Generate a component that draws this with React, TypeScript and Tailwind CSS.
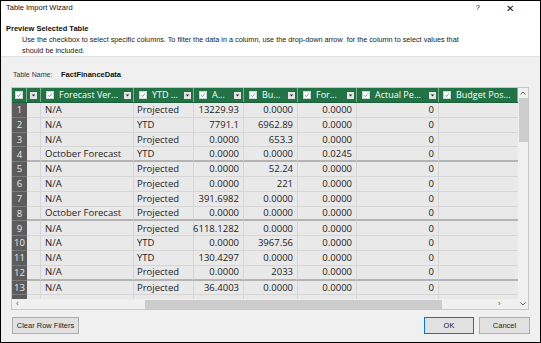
import React from "react";

const cols = "grid grid-cols-[15px_14px_93px_60px_50px_54px_59px_82px_79px]";

const rows: [string, string, string, string, string, string][] = [
  ["N/A", "Projected", "13229.93", "0.0000", "0.0000", "0"],
  ["N/A", "YTD", "7791.1", "6962.89", "0.0000", "0"],
  ["N/A", "Projected", "0.0000", "653.3", "0.0000", "0"],
  ["October Forecast", "YTD", "0.0000", "0.0000", "0.0245", "0"],
  ["N/A", "Projected", "0.0000", "52.24", "0.0000", "0"],
  ["N/A", "Projected", "0.0000", "221", "0.0000", "0"],
  ["N/A", "Projected", "391.6982", "0.0000", "0.0000", "0"],
  ["October Forecast", "Projected", "0.0000", "0.0000", "0.0000", "0"],
  ["N/A", "Projected", "6118.1282", "0.0000", "0.0000", "0"],
  ["N/A", "YTD", "0.0000", "3967.56", "0.0000", "0"],
  ["N/A", "YTD", "130.4297", "0.0000", "0.0000", "0"],
  ["N/A", "Projected", "0.0000", "2033", "0.0000", "0"],
  ["N/A", "Projected", "36.4003", "0.0000", "0.0000", "0"],
];

function Check() {
  return (
    <svg width="8" height="8" viewBox="0 0 8 8" className="shrink-0">
      <rect x="0.5" y="0.5" width="7" height="7" fill="#fff" stroke="#c9d6cc" />
      <path d="M2 4.2 L3.4 5.6 L6 2.4" fill="none" stroke="#6d87b0" strokeWidth="0.9" />
    </svg>
  );
}

function Drop() {
  return (
    <svg width="7" height="7" viewBox="0 0 7 7" className="shrink-0">
      <rect x="0" y="0" width="7" height="7" fill="#e4e4e4" />
      <path d="M1.8 2.6 H5.2 L3.5 4.6 Z" fill="#222" />
    </svg>
  );
}

function HeadCell({ label }: { label: string }) {
  return (
    <div className="flex items-center pl-[5px] pr-[2px] border-r border-[#7fae8e] h-full">
      <Check />
      <span className="ml-[5px] flex-1 truncate text-white">{label}</span>
      <Drop />
    </div>
  );
}

export default function App() {
  return (
    <div className="w-[541px] h-[343px] bg-[#f0f0f0] border border-black flex flex-col text-[#111] font-['Liberation_Sans',Arial,sans-serif] overflow-hidden">
      {/* Header */}
      <div className="bg-white h-[56px] shrink-0 border-b border-[#e0e0e0]">
        <div className="h-[14px] flex items-center pl-[5px] pr-[26px] text-[7.5px]">
          <span className="flex-1">Table Import Wizard</span>
          <span className="mr-[26px]">?</span>
          <span className="text-[10px] font-light">✕</span>
        </div>
        <div className="mt-[9px] pl-[5px] text-[7.5px] leading-[10px] font-bold">Preview Selected Table</div>
        <div className="ml-[21px] w-[446px] text-[7.25px] leading-[11px] text-[#222]">
          Use the checkbox to select specific columns. To filter the data in a column, use the drop-down arrow&nbsp; for the column to select values that should be included.
        </div>
      </div>

      {/* Table name */}
      <div className="mt-[13px] ml-[12px] h-[10px] flex items-center text-[7px]">
        <span className="w-[48px] text-[#333]">Table Name:</span>
        <span className="font-bold text-[7.5px]">FactFinanceData</span>
      </div>

      {/* Grid */}
      <div className="mt-[7px] ml-[10px] w-[518px] border border-[#c8c8c8] flex font-['Open_Sans',sans-serif] text-[9.5px]">
        <div className="w-[506px] flex flex-col">
          <div className="h-[211px] overflow-hidden">
            <div className={`${cols} h-[15px] bg-[#217346] border-b border-[#1b5e39] text-[9px]`}>
              <div className="flex items-center justify-center border-r border-[#7fae8e]">
                <Check />
              </div>
              <div className="flex items-center justify-center border-r border-[#7fae8e]">
                <Drop />
              </div>
              <HeadCell label="Forecast Ver..." />
              <HeadCell label="YTD ..." />
              <HeadCell label="A..." />
              <HeadCell label="Bu..." />
              <HeadCell label="For..." />
              <HeadCell label="Actual Pe..." />
              <div className="flex items-center pl-[4px] border-r border-[#7fae8e] overflow-hidden">
                <Check />
                <span className="ml-[5px] text-white whitespace-nowrap">Budget Pos...</span>
              </div>
            </div>
            {[...rows, ["", "", "", "", "", ""] as typeof rows[number]].map((r, i) => {
              const group = (i + 1) % 4 === 0;
              const line = group ? "border-b-2 border-b-[#b4b4b4]" : "border-b border-b-[#d6d6d6]";
              return (
                <div key={i} className={`${cols} h-[14.8px] leading-none bg-[#e9e9e9] text-[#222]`}>
                  <div className="bg-[#5c5c5c] text-[#e8e8e8] flex items-center justify-center border-b border-[#7a7a7a]">
                    {i < 13 ? i + 1 : ""}
                  </div>
                  <div className={`border-r border-r-[#d6d6d6] ${line}`} />
                  <div className={`flex items-center pl-[4px] border-r border-r-[#d6d6d6] ${line}`}>{r[0]}</div>
                  <div className={`flex items-center pl-[3px] border-r border-r-[#d6d6d6] ${line}`}>{r[1]}</div>
                  <div className={`flex items-center justify-end pr-[4px] border-r border-r-[#d6d6d6] ${line}`}>{r[2]}</div>
                  <div className={`flex items-center justify-end pr-[4px] border-r border-r-[#d6d6d6] ${line}`}>{r[3]}</div>
                  <div className={`flex items-center justify-end pr-[4px] border-r border-r-[#d6d6d6] ${line}`}>{r[4]}</div>
                  <div className={`flex items-center justify-end pr-[4px] border-r border-r-[#d6d6d6] ${line}`}>{r[5]}</div>
                  <div className={`${line}`} />
                </div>
              );
            })}
          </div>
          {/* Horizontal scrollbar */}
          <div className="h-[10px] bg-[#f0f0f0] flex items-center font-['Liberation_Sans',sans-serif] text-[8px] text-[#555]">
            <span className="w-[133px] pl-[4px]">‹</span>
            <div className="w-[297px] h-[9px] bg-[#cdcdcd]" />
            <span className="ml-[56px]">›</span>
          </div>
        </div>
        {/* Vertical scrollbar */}
        <div className="w-[10px] bg-[#f0f0f0] flex flex-col items-center font-['Liberation_Sans',sans-serif] text-[7px] text-[#555]">
          <div className="h-[10px] flex items-center">
            <svg width="6" height="4" viewBox="0 0 6 4">
              <path d="M0.5 3.5 L3 1 L5.5 3.5" fill="none" stroke="#555" strokeWidth="0.9" />
            </svg>
          </div>
          <div className="w-[9px] h-[44px] bg-[#cdcdcd]" />
          <div className="flex-1" />
          <div className="h-[10px] flex items-center">
            <svg width="6" height="4" viewBox="0 0 6 4">
              <path d="M0.5 0.5 L3 3 L5.5 0.5" fill="none" stroke="#555" strokeWidth="0.9" />
            </svg>
          </div>
        </div>
      </div>

      {/* Footer buttons */}
      <div className="mt-[7px] flex items-center pl-[11px] pr-[10px] text-[7.5px]">
        <button className="w-[67px] h-[17px] bg-[#e1e1e1] border border-[#adadad] text-[#222]">Clear Row Filters</button>
        <div className="flex-1" />
        <button className="w-[50px] h-[17px] bg-[#e1e1e1] border border-[#0078d7] text-[#222]">OK</button>
        <button className="ml-[5px] w-[51px] h-[17px] bg-[#e1e1e1] border border-[#adadad] text-[#222]">Cancel</button>
      </div>
    </div>
  );
}
